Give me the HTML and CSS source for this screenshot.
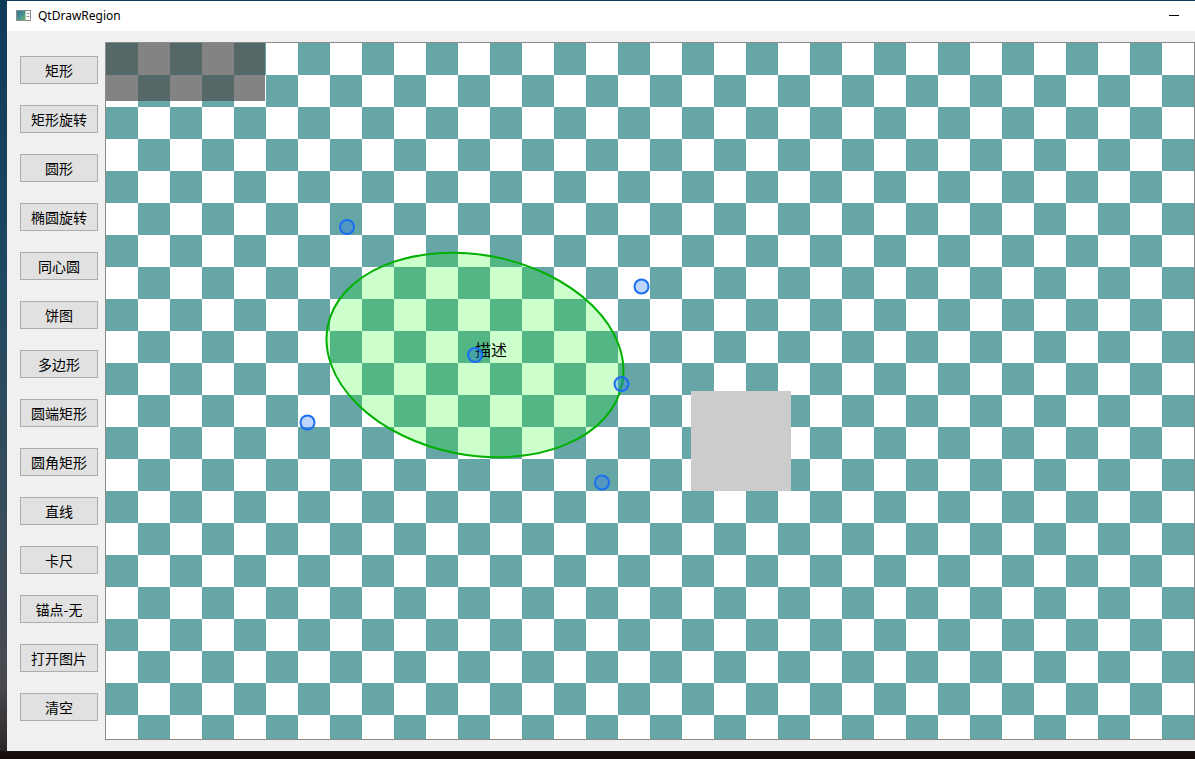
FILE: index.html
```html
<!DOCTYPE html>
<html lang="zh">
<head>
<meta charset="utf-8">
<title>QtDrawRegion</title>
<link rel="stylesheet" href="styles.css">
</head>
<body>
<div class="window">
  <div class="titlebar">
    <svg class="app-icon" width="15" height="11" viewBox="0 0 15 11">
      <defs>
        <linearGradient id="ig" x1="0" y1="0" x2="1" y2="1">
          <stop offset="0" stop-color="#2f6d9c"/>
          <stop offset="0.6" stop-color="#4f9a8a"/>
          <stop offset="1" stop-color="#74b86a"/>
        </linearGradient>
      </defs>
      <rect x="0.5" y="0.5" width="14" height="10" fill="#ffffff" stroke="#8c8c8c"/>
      <rect x="1" y="1" width="8.5" height="9" fill="url(#ig)"/>
      <line x1="10.5" y1="3.5" x2="13.5" y2="3.5" stroke="#9a9a9a"/>
      <line x1="10.5" y1="6.5" x2="13.5" y2="6.5" stroke="#9a9a9a"/>
    </svg>
    <span class="title">QtDrawRegion</span>
    <span class="minimize"></span>
  </div>
  <div class="client">
    <div class="sidebar">
      <button class="btn">矩形</button>
      <button class="btn">矩形旋转</button>
      <button class="btn">圆形</button>
      <button class="btn">椭圆旋转</button>
      <button class="btn">同心圆</button>
      <button class="btn">饼图</button>
      <button class="btn">多边形</button>
      <button class="btn">圆端矩形</button>
      <button class="btn">圆角矩形</button>
      <button class="btn">直线</button>
      <button class="btn">卡尺</button>
      <button class="btn">锚点-无</button>
      <button class="btn">打开图片</button>
      <button class="btn">清空</button>
    </div>
    <div class="canvas">
      <svg class="scene" width="1088" height="696" viewBox="0 0 1088 696">
        <defs>
          <pattern id="checker" width="64" height="64" patternUnits="userSpaceOnUse">
            <rect width="64" height="64" fill="#ffffff"/>
            <rect width="32" height="32" fill="#67a6a6"/>
            <rect x="32" y="32" width="32" height="32" fill="#67a6a6"/>
          </pattern>
        </defs>
        <rect width="1088" height="696" fill="url(#checker)"/>
        <rect x="0" y="0" width="159" height="58" fill="rgba(78,78,78,0.7)"/>
        <rect x="585" y="348" width="100" height="100" fill="#cccccc"/>
        <ellipse cx="369" cy="312" rx="150" ry="100" transform="rotate(11 369 312)" fill="rgba(0,255,0,0.2)" stroke="#00b000" stroke-width="2"/>
        <text x="369" y="313" class="label">描述</text>
        <g class="handle">
          <circle cx="241" cy="184" r="7"/>
          <circle cx="535.5" cy="243.5" r="7"/>
          <circle cx="369" cy="312" r="7"/>
          <circle cx="515.5" cy="341" r="7"/>
          <circle cx="201.5" cy="379.5" r="7"/>
          <circle cx="496" cy="439.5" r="7"/>
        </g>
      </svg>
    </div>
  </div>
</div>
</body>
</html>
```
FILE: styles.css
```css
html, body {
  margin: 0;
  padding: 0;
}
body {
  width: 1195px;
  height: 759px;
  overflow: hidden;
  background:
    linear-gradient(to bottom, transparent 0, transparent 751px, #1a120c 751px, #120d0a 759px),
    linear-gradient(to bottom, #0f3a58 0%, #1d4862 35%, #3a4d5a 70%, #4a4a50 90%, #2a2224 100%);
  font-family: "Noto Sans", "Noto Sans CJK SC", sans-serif;
}
.window {
  margin-left: 7px;
  margin-top: 1px;
  width: 1188px;
  height: 750px;
  background: #f0f0f0;
  border-top: 0;
}
.titlebar {
  height: 30px;
  background: #ffffff;
  display: flex;
  align-items: center;
  position: relative;
}
.app-icon {
  margin-left: 9px;
  margin-top: -1px;
  flex: none;
}
.title {
  margin-left: 7px;
  font-family: "Noto Sans", "Open Sans", sans-serif;
  font-size: 12px;
  color: #000000;
  margin-top: -1px;
}
.minimize {
  position: absolute;
  left: 1162px;
  top: 14px;
  width: 10px;
  height: 1px;
  background: #000000;
}
.client {
  display: flex;
  height: 720px;
  background: #f0f0f0;
}
.sidebar {
  width: 85px;
  flex: none;
  padding-left: 13px;
  padding-top: 25px;
  display: flex;
  flex-direction: column;
  gap: 21px;
}
.btn {
  width: 78px;
  height: 28px;
  box-sizing: border-box;
  border: 1px solid #adadad;
  background: #e1e1e1;
  font-family: "Noto Sans CJK SC", sans-serif;
  font-size: 14px;
  color: #000000;
  padding: 0;
  margin: 0;
  line-height: 26px;
  text-align: center;
  border-radius: 0;
}
.canvas {
  margin-top: 11px;
  width: 1088px;
  height: 696px;
  border: 1px solid #8c8c8c;
  flex: none;
  background: #ffffff;
}
.scene {
  display: block;
}
.label {
  font-family: "Noto Sans CJK SC", sans-serif;
  font-size: 16px;
  fill: #000000;
}
.handle circle {
  fill: rgba(40, 120, 255, 0.3);
  stroke: #1a6ff0;
  stroke-width: 2;
}
```
